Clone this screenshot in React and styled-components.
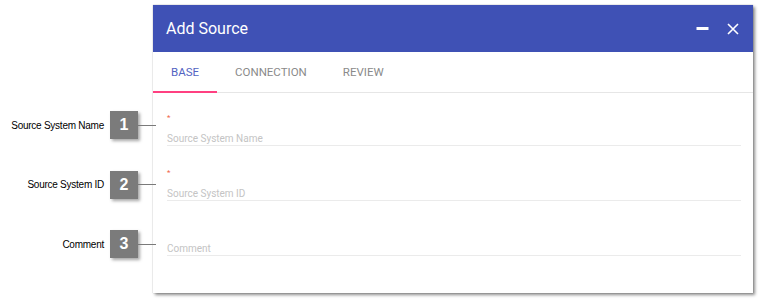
import React from "react";
import styled, { createGlobalStyle } from "styled-components";

const Global = createGlobalStyle`
  html, body { margin: 0; padding: 0; background: #ffffff; }
  body { font-family: Roboto, "Liberation Sans", Arial, sans-serif; }
  * { box-sizing: border-box; }
`;

const Page = styled.div`
  display: flex;
  align-items: flex-start;
  width: 762px;
  height: 303px;
  padding-top: 5px;
`;

const Annotations = styled.div`
  width: 153px;
  flex: none;
  display: flex;
  flex-direction: column;
  gap: 31.5px;
  padding-top: 106px;
  position: relative;
  z-index: 2;
`;

const Callout = styled.div`
  display: flex;
  align-items: center;
  height: 28px;
`;

const CalloutLabel = styled.span`
  flex: 1;
  text-align: right;
  padding-right: 6px;
  font-family: "Liberation Sans", Arial, sans-serif;
  font-size: 10px;
  letter-spacing: -0.25px;
  color: #000;
  white-space: nowrap;
`;

const Badge = styled.div`
  width: 28px;
  height: 28px;
  flex: none;
  background: #7b7b7b;
  color: #fff;
  font-family: "Liberation Sans", Arial, sans-serif;
  font-weight: bold;
  font-size: 16px;
  display: flex;
  align-items: center;
  justify-content: center;
  box-shadow: 2px 2px 3px rgba(0, 0, 0, 0.35);
`;

const Connector = styled.div`
  width: 18px;
  height: 1px;
  background: #7a7a7a;
  margin-right: -3px;
  flex: none;
`;

const Dialog = styled.div`
  width: 600px;
  height: 288px;
  background: #fff;
  display: flex;
  flex-direction: column;
  box-shadow: 2px 2px 3px rgba(0, 0, 0, 0.45), 0 0 1px rgba(0, 0, 0, 0.35);
`;

const Header = styled.div`
  height: 47px;
  background: #3f51b5;
  display: flex;
  align-items: center;
  padding: 0 14px 0 13px;
`;

const Title = styled.h1`
  flex: 1;
  margin: 0;
  font-family: Roboto, "Liberation Sans", Arial, sans-serif;
  font-weight: 400;
  font-size: 16px;
  color: #fff;
`;

const IconButton = styled.button`
  border: none;
  background: transparent;
  padding: 0;
  margin-left: ${(p) => p.$gap || 0}px;
  display: flex;
  align-items: center;
  justify-content: center;
  cursor: pointer;
`;

const Tabs = styled.div`
  display: flex;
  height: 41px;
  border-bottom: 1px solid #e6e6e6;
`;

const Tab = styled.div`
  padding: 0 18px;
  display: flex;
  align-items: center;
  font-family: Roboto, "Liberation Sans", Arial, sans-serif;
  font-size: 11.5px;
  text-transform: uppercase;
  color: ${(p) => (p.$active ? "#5364c2" : "#8a8a8a")};
  border-bottom: 2px solid ${(p) => (p.$active ? "#ff4081" : "transparent")};
  margin-bottom: -1px;
`;

const Form = styled.div`
  padding: 16px 12px 0 14px;
  display: flex;
  flex-direction: column;
  gap: 18px;
`;

const Field = styled.div`
  display: flex;
  flex-direction: column;
`;

const Required = styled.div`
  height: 14px;
  padding-top: 3px;
  display: flex;
  align-items: center;
  color: #f0654a;
  font-size: 8px;
  line-height: 11px;
`;

const Input = styled.div`
  height: 23px;
  display: flex;
  align-items: flex-end;
  padding-bottom: 0;
  border-bottom: 1px solid #ebebeb;
  font-family: Roboto, "Liberation Sans", Arial, sans-serif;
  font-size: 10px;
  line-height: 12px;
  color: #c4c4c4;
`;

const callouts = [
  { n: 1, label: "Source System Name" },
  { n: 2, label: "Source System ID" },
  { n: 3, label: "Comment" },
];

const fields = [
  { placeholder: "Source System Name", required: true },
  { placeholder: "Source System ID", required: true },
  { placeholder: "Comment", required: false },
];

export default function App() {
  return (
    <>
      <Global />
      <Page>
        <Annotations>
          {callouts.map((c) => (
            <Callout key={c.n}>
              <CalloutLabel>{c.label}</CalloutLabel>
              <Badge>{c.n}</Badge>
              <Connector />
            </Callout>
          ))}
        </Annotations>
        <Dialog>
          <Header>
            <Title>Add Source</Title>
            <IconButton aria-label="minimize">
              <svg width="13" height="13" viewBox="0 0 13 13">
                <rect x="0.5" y="5" width="12" height="3" fill="#fff" />
              </svg>
            </IconButton>
            <IconButton aria-label="close" $gap={18}>
              <svg width="12" height="12" viewBox="0 0 12 12">
                <path d="M1 1 L11 11 M11 1 L1 11" stroke="#fff" strokeWidth="1.6" fill="none" />
              </svg>
            </IconButton>
          </Header>
          <Tabs>
            <Tab $active>Base</Tab>
            <Tab>Connection</Tab>
            <Tab>Review</Tab>
          </Tabs>
          <Form>
            {fields.map((f) => (
              <Field key={f.placeholder}>
                <Required>{f.required ? "*" : ""}</Required>
                <Input>{f.placeholder}</Input>
              </Field>
            ))}
          </Form>
        </Dialog>
      </Page>
    </>
  );
}
